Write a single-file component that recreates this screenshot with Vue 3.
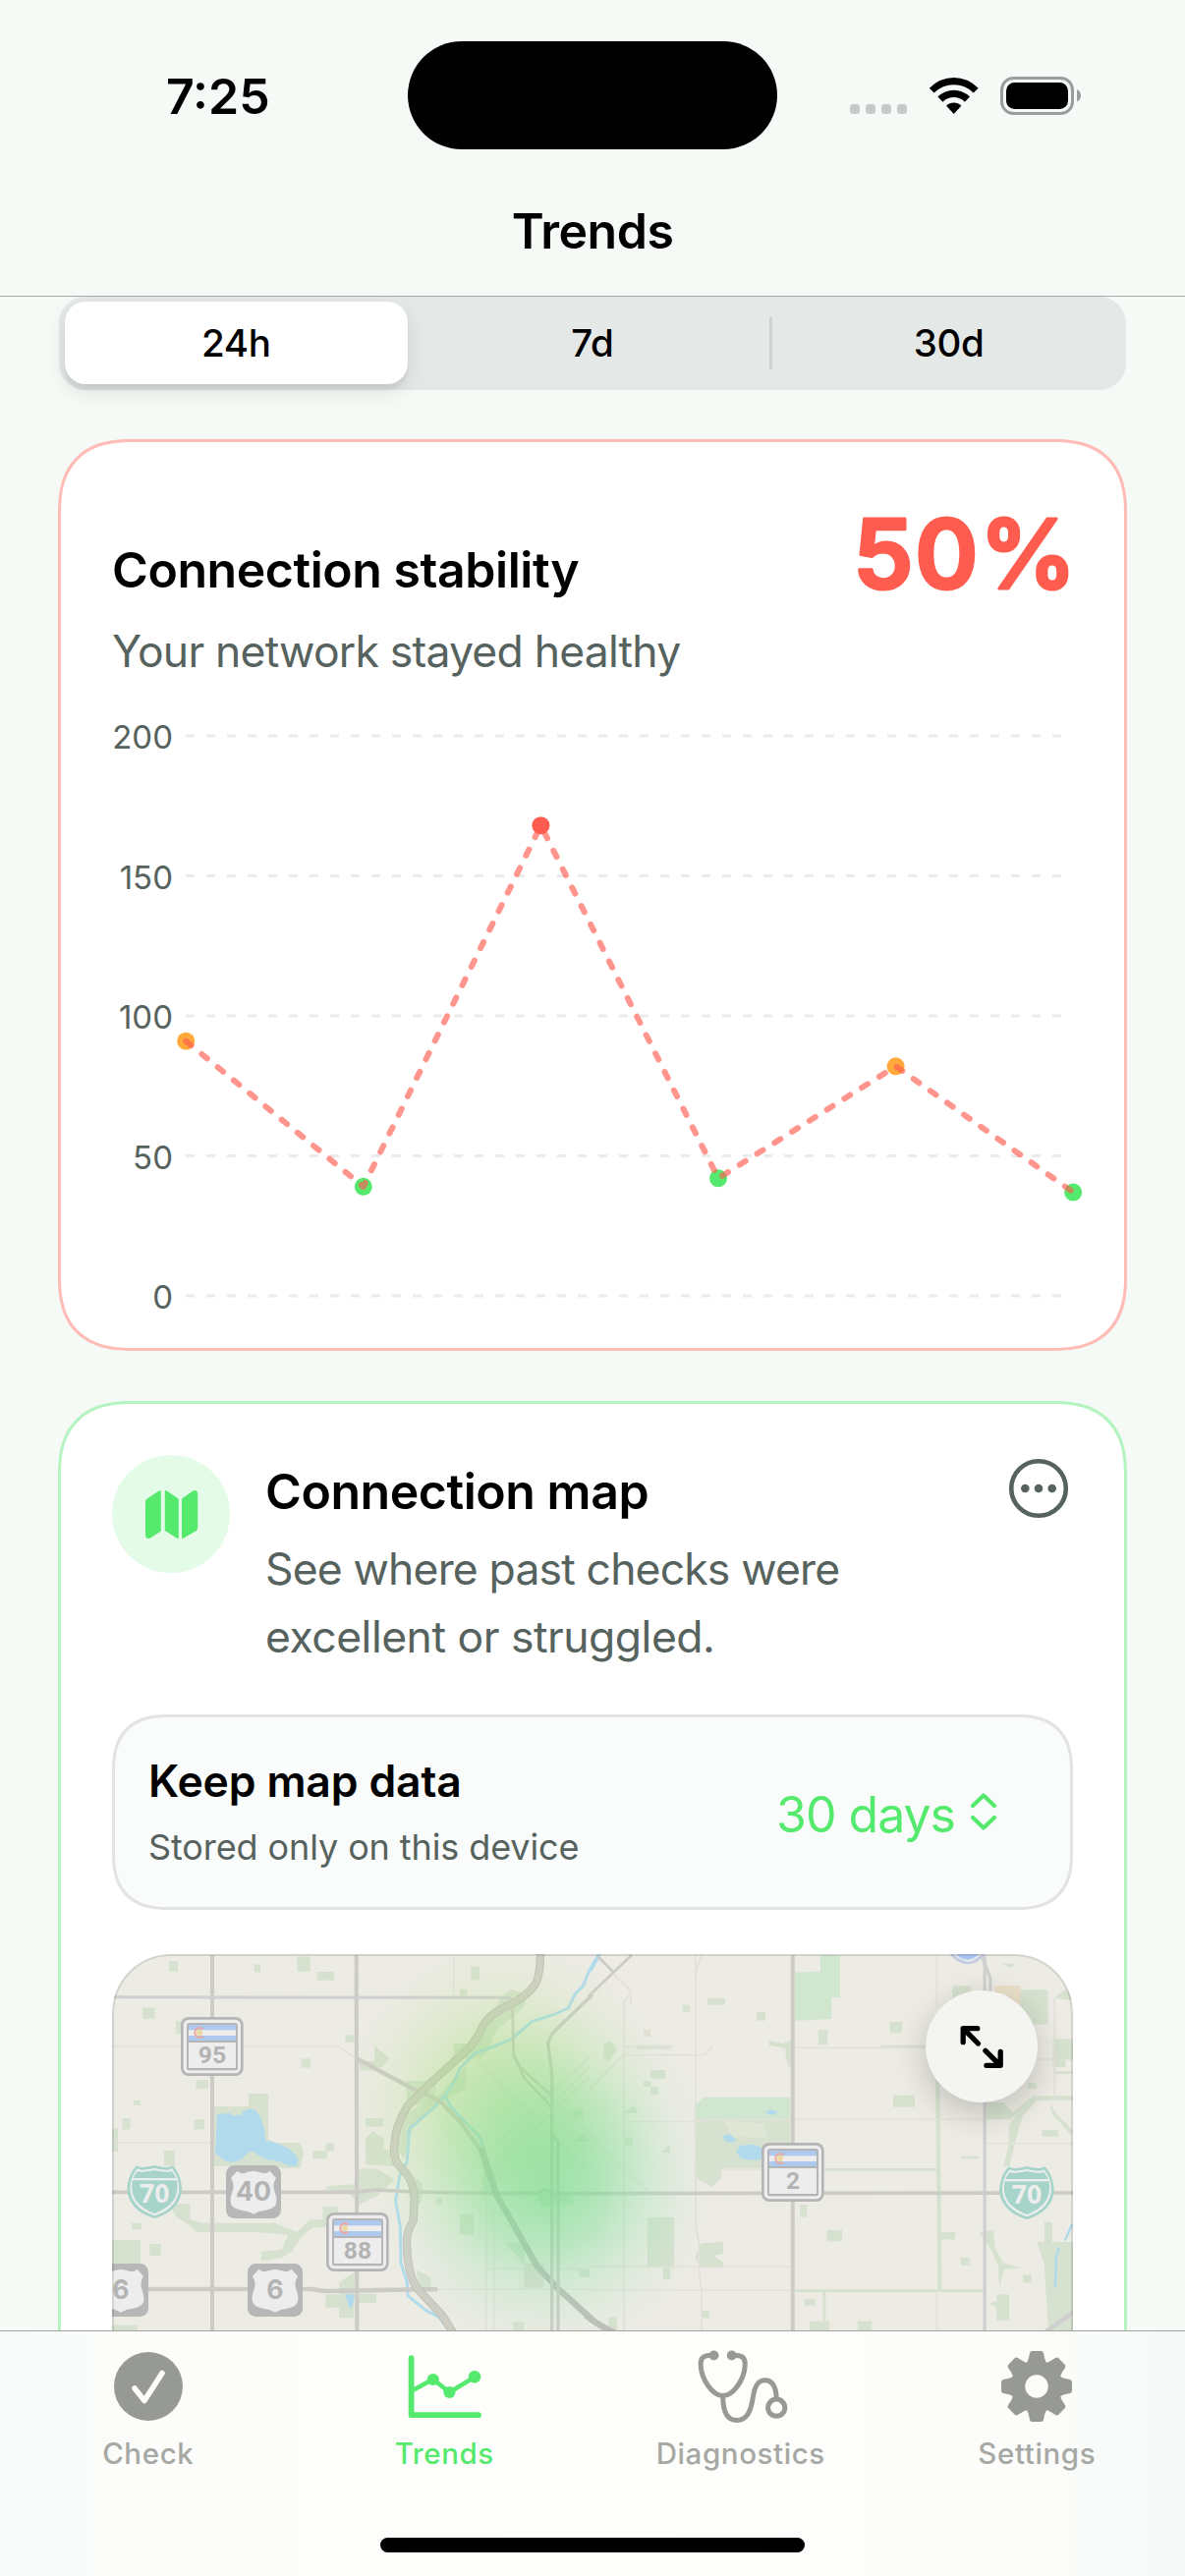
<script setup>
import { ref, computed } from 'vue';

const ranges = ['24h', '7d', '30d'];
const activeRange = ref('24h');
const activeTab = ref('Trends');
const tabs = ['Check', 'Trends', 'Diagnostics', 'Settings'];

const gridValues = [200, 150, 100, 50, 0];
const samples = [
    { value: 91, color: '#ffa93b' },
    { value: 39, color: '#55ea6e' },
    { value: 168, color: '#ff5c50' },
    { value: 42, color: '#55ea6e' },
    { value: 82, color: '#ffa93b' },
    { value: 37, color: '#55ea6e' },
];

function valueY(value) {
    return 599 - value * 2.85;
}

function sampleX(index) {
    return 74.2 + index * 180.6;
}

const linePoints = computed(() => samples.map((s, i) => `${sampleX(i)},${valueY(s.value)}`).join(' '));

// Parks left of the river: x, y, width, height
const westParks = [
    [216, 78, 27, 32], [477, 88, 18, 24], [607, 64, 40, 46], [667, 111, 53, 26], [1138, 94, 26, 42],
    [1104, 165, 22, 20], [136, 220, 37, 34], [237, 262, 30, 38], [754, 304, 28, 22], [620, 376, 28, 28],
    [298, 442, 37, 26], [108, 504, 20, 14], [74, 558, 24, 34], [292, 562, 32, 30], [201, 657, 32, 46],
    [816, 558, 54, 26], [655, 658, 44, 24], [694, 634, 26, 24], [42, 930, 87, 74], [157, 942, 34, 36],
    [102, 878, 30, 20], [686, 828, 46, 50], [1104, 850, 42, 64],
    [1266, 1180, 34, 28], [694, 1096, 46, 40], [795, 1094, 54, 28], [942, 444, 88, 74], [1085, 330, 70, 46],
    [42, 590, 18, 70], [1032, 802, 18, 18], [1470, 1018, 30, 26], [1450, 532, 30, 28], [42, 1190, 78, 18],
    [797, 384, 46, 28],
];
const eastParks = [
    [336, 192, 50, 20], [265, 212, 20, 22], [476, 234, 25, 26], [652, 288, 26, 46], [865, 488, 62, 36],
    [856, 264, 34, 34], [174, 411, 42, 26], [154, 444, 20, 18], [174, 462, 22, 24], [98, 618, 24, 26],
    [600, 822, 19, 38], [676, 900, 44, 34], [1058, 984, 26, 24], [613, 1110, 30, 20], [764, 1178, 40, 30],
    [628, 1178, 56, 30], [165, 861, 76, 152], [210, 1010, 20, 40], [134, 335, 96, 12], [1034, 154, 52, 40],
    [1248, 450, 26, 18], [1320, 316, 60, 64], [1060, 674, 50, 8], [1002, 906, 40, 22], [1236, 1036, 24, 24],
    [322, 1146, 20, 22], [54, 1164, 24, 44], [1290, 594, 46, 20], [1160, 1096, 36, 80], [1226, 166, 80, 106],
    [1296, 876, 22, 62], [1320, 380, 36, 22],
];

const stateRoutes = [
    { label: '95', x: 252, y: 249 },
    { label: '88', x: 696, y: 846 },
    { label: '2', x: 2025, y: 633 },
];
const usRoutes = [
    { label: '40', x: 390, y: 702 },
    { label: '6', x: 456, y: 1002 },
    { label: '6', x: -15, y: 1002 },
];
const interstates = [
    { label: '70', x: 88, y: 701 },
    { label: '70', x: 2751, y: 704 },
];

const gearTeeth = [0, 45, 90, 135, 180, 225, 270, 315];
</script>

<template>
    <div class="screen">
        <header class="top-bar">
            <div class="status-row">
                <div class="clock">7:25</div>
                <div class="island"></div>
                <svg class="status-icons" viewBox="865 70 240 56">
                    <g fill="#c5c9c7">
                        <rect x="865" y="106" width="10" height="10" rx="3.2" />
                        <rect x="881" y="106" width="10" height="10" rx="3.2" />
                        <rect x="897" y="106" width="10" height="10" rx="3.2" />
                        <rect x="913" y="106" width="10" height="10" rx="3.2" />
                    </g>
                    <path d="M945.8 89.8 Q956.5 79 970.7 79 Q985 79 995.6 89.8 L990.8 94.6 Q982.3 86.3 970.7 86.3 Q959.2 86.3 950.6 94.6 Z" />
                    <path d="M954.4 98.6 Q961.5 91.8 970.7 91.8 Q980 91.8 987 98.6 L981.9 103.7 Q977.2 99.1 970.7 99.1 Q964.3 99.1 959.5 103.7 Z" />
                    <path d="M963.1 107.8 Q966.3 104.5 970.7 104.5 Q975.1 104.5 978.3 107.8 L970.7 116 Z" />
                    <rect x="1019.5" y="79.5" width="72" height="36" rx="12" fill="none" stroke="#999d9b" stroke-width="3" />
                    <rect x="1024" y="84" width="63" height="27" rx="8.5" />
                    <path d="M1096 91 Q1100 93 1100 97.3 Q1100 101.5 1096 103.5 Z" fill="#999d9b" />
                </svg>
            </div>
            <h1 class="page-title">Trends</h1>
        </header>

        <main class="content">
            <div class="segmented">
                <button
                    v-for="range in ranges" :key="range"
                    class="segment" :class="{ 'segment-active': range === activeRange }"
                    @click="activeRange = range">{{ range }}</button>
            </div>

            <section class="card card-red">
                <div class="stability-head">
                    <h2 class="card-title">Connection stability</h2>
                    <svg class="percent" viewBox="0 0 244 130">
                        <text x="8 71 137" y="99">50%</text>
                    </svg>
                </div>
                <p class="stability-text">Your network stayed healthy</p>
                <svg class="chart" viewBox="0 0 979 640">
                    <g v-for="value in gridValues" :key="value">
                        <text class="axis-label" x="61" :y="valueY(value) + 13" text-anchor="end">{{ value }}</text>
                        <line class="grid-line" x1="74" x2="965" :y1="valueY(value)" :y2="valueY(value)" />
                    </g>
                    <circle
                        v-for="(sample, index) in samples" :key="index"
                        :cx="sampleX(index)" :cy="valueY(sample.value)" r="9" :fill="sample.color" />
                    <polyline class="trend-line" :points="linePoints" />
                </svg>
            </section>

            <section class="card card-green">
                <div class="map-head">
                    <div class="map-badge">
                        <svg viewBox="0 0 120 120" fill="#55ea6e" stroke="#55ea6e" stroke-width="2" stroke-linejoin="round">
                            <path d="M35 47.5 Q35 46 36.5 45 L48.8 37 V77 L38.5 83.6 Q35 85 35 81 Z" />
                            <path d="M54.8 37 L66.8 45 V84 L54.8 76.5 Z" />
                            <path d="M72 45 L82.5 37.5 Q86.2 36 86.2 40 V74 Q86.2 75.5 85 76.4 L72 84 Z" />
                        </svg>
                    </div>
                    <div class="map-copy">
                        <h2 class="card-title">Connection map</h2>
                        <p class="map-text">See where past checks were<br><span class="map-text-end">excellent or struggled.</span></p>
                    </div>
                    <svg class="more" viewBox="0 0 62 62">
                        <circle cx="31" cy="31" r="27.8" fill="none" stroke="#56625e" stroke-width="4.6" />
                        <circle cx="17.3" cy="31" r="4.3" fill="#56625e" />
                        <circle cx="31" cy="31" r="4.3" fill="#56625e" />
                        <circle cx="44.7" cy="31" r="4.3" fill="#56625e" />
                    </svg>
                </div>

                <div class="keep-box">
                    <div class="keep-copy">
                        <h3 class="keep-title">Keep map data</h3>
                        <p class="keep-text">Stored only on this device</p>
                    </div>
                    <div class="keep-picker">
                        <span class="keep-value">30 days</span>
                        <svg class="chevrons" viewBox="0 0 28 40">
                            <path d="M3 14 L14 3.5 L25 14 M3 26 L14 36.5 L25 26" />
                        </svg>
                    </div>
                </div>

                <div class="map">
                    <svg class="map-canvas" viewBox="114 1989 979 400">
                        <defs>
                            <radialGradient id="heatYellow">
                                <stop offset="0" stop-color="#8fdc68" stop-opacity=".5" />
                                <stop offset=".35" stop-color="#9adf70" stop-opacity=".38" />
                                <stop offset=".7" stop-color="#b4e486" stop-opacity=".15" />
                                <stop offset="1" stop-color="#cfe9a0" stop-opacity="0" />
                            </radialGradient>
                            <radialGradient id="heatGreen">
                                <stop offset="0" stop-color="#6fdd8c" stop-opacity=".52" />
                                <stop offset=".35" stop-color="#7be097" stop-opacity=".4" />
                                <stop offset=".7" stop-color="#98e6b0" stop-opacity=".18" />
                                <stop offset="1" stop-color="#b5ecc6" stop-opacity="0" />
                            </radialGradient>
                        </defs>
                        <rect x="114" y="1989" width="979" height="400" fill="#ecebe4" />

                        <!-- west half -->
                        <g transform="translate(100 1970) scale(.33333)">
                            <g fill="#d6e1cf">
                                <rect v-for="(p, i) in westParks" :key="i" :x="p[0]" :y="p[1]" :width="p[2]" :height="p[3]" />
                                <path d="M355 522 H459 V483 H519 V622 L540 633 H615 L627 660 L617 710 H560 L540 704 H355 Z" />
                                <path d="M843 336 L890 376 L868 402 H843 Z M816 618 L838 598 L872 620 V650 L905 658 V705 L816 700 Z" />
                                <path d="M797 712 H850 L905 745 L860 790 L797 822 L768 790 L697 776 V766 L780 760 Z" />
                                <path d="M216 820 H280 V866 L312 878 H540 L606 905 L648 868 H696 V892 H655 L625 915 L590 965 L560 984 L498 994 V965 L560 960 L580 915 L480 905 H300 L280 886 L240 860 Z" />
                                <path d="M1228 190 L1262 165 L1308 178 L1300 220 L1215 290 L1190 350 L1165 380 L1150 350 L1190 270 Z" />
                                <path d="M910 560 L985 520 L1050 480 L1090 430 L1126 400 L1120 470 L1060 500 L960 590 L935 680 L905 650 Z" />
                                <path d="M735 1060 L785 1025 L780 1168 H735 Z M970 740 L990 760 L988 812 L960 830 Z M970 1020 L1015 1045 L1020 1090 L980 1080 Z" />
                                <path d="M1170 740 L1195 700 L1215 730 L1215 790 L1180 790 Z M1340 790 L1385 785 L1380 825 L1350 832 Z M1450 630 L1480 600 L1500 630 Z" />
                                <path d="M1245 940 H1300 V1010 L1280 980 Z M1390 790 H1450 V820 H1390 Z" />
                            </g>
                            <rect x="1300" y="1000" width="60" height="76" fill="#e0dcd4" />
                            <g class="minor-road">
                                <path d="M42 338 H730 L792 380 M42 633 H345 M1085 60 V185 M800 1080 H1500 M1185 800 V1208 M1208 830 V1208 M1185 1018 H1500" />
                                <path d="M1150 380 L1500 720 M1200 720 L1500 430 M1215 640 L1500 370 M1240 660 L1500 400 M1400 510 L1500 610" />
                            </g>
                            <g fill="#b1dbec">
                                <path d="M363 546 L400 542 L412 550 L440 547 L440 538 L460 530 L480 533 L498 560 L508 600 L510 626 L545 634 L580 650 L600 668 L612 685 L604 704 L578 703 L555 690 L515 684 L490 672 L470 657 L450 670 L440 682 L420 692 L390 690 L357 665 Z" />
                                <path d="M754 1096 H783 L780 1120 L770 1142 L762 1125 Z" />
                            </g>
                            <g class="water-line">
                                <path d="M1500 105 L1480 155 L1455 180 L1435 222 L1395 240 L1325 262 L1260 318 L1205 340 L1150 360 L1105 405 L1085 450 L1058 490 L1020 530 L950 590 L943 690 L920 735 L908 810 L922 890 L924 1000 L943 1060 L945 1100 L1000 1145 L1040 1165 L1070 1205" />
                                <path d="M1058 490 L1078 525 L1130 580 L1165 615 L1178 660" />
                            </g>
                            <g class="road">
                                <path d="M348 60 V1210 M788 60 L790 1210" stroke-width="12" />
                                <path d="M42 188 L1255 190 L1275 205" stroke="#cfcfcf" stroke-width="9" />
                                <path d="M42 784 H780 L850 777 L960 783 L1190 787 H1340 L1362 776 L1385 788 H1500" stroke-width="11" />
                                <path d="M790 376 L960 468 L990 478 L1050 512 L1110 575 L1165 652 L1195 750" stroke-width="13" />
                                <path class="trunk-road" d="M1170 650 L1215 790 L1340 1010 L1400 1075 L1510 1175" />
                                <path d="M1265 225 L1268 365 L1300 435 L1385 525 M1268 365 L1290 405 L1385 490" />
                                <path d="M1510 180 L1385 300 L1373 330 L1385 420 V1210 M1385 605 L1404 630 V1210" stroke-width="10" />
                                <path d="M42 1080 H650 L690 1086 L1035 1080" stroke-width="13" />
                            </g>
                            <path class="highway-edge" d="M1350 50 Q1350 130 1330 155 Q1305 190 1240 220 Q1190 245 1175 275 Q1155 325 1120 355 L1010 455 L945 520 Q905 580 903 650 Q903 690 925 710 Q965 750 965 800 L962 870 Q942 905 942 930 Q942 1050 985 1090 L1050 1160 L1085 1215" />
                            <path class="highway" d="M1350 50 Q1350 130 1330 155 Q1305 190 1240 220 Q1190 245 1175 275 Q1155 325 1120 355 L1010 455 L945 520 Q905 580 903 650 Q903 690 925 710 Q965 750 965 800 L962 870 Q942 905 942 930 Q942 1050 985 1090 L1050 1160 L1085 1215" />
                        </g>

                        <!-- east half -->
                        <g transform="translate(600 1970) scale(.35714 .33333)">
                            <g fill="#d6e1cf">
                                <rect v-for="(p, i) in eastParks" :key="i" :x="p[0]" :y="p[1]" :width="p[2]" :height="p[3]" />
                                <path d="M300 520 L325 494 H572 V710 H376 V738 L350 768 L310 745 L300 715 Z" />
                                <path d="M512 322 L550 330 L574 318 V410 L560 380 L558 345 L512 335 Z M318 940 L381 936 V972 L352 978 L381 1000 V1010 L318 1013 L300 985 Z" />
                                <path d="M38 380 L42 330 L62 322 L78 350 L55 384 Z M98 542 L125 520 L140 542 Z M204 662 L230 640 V664 Z" />
                                <path d="M1130 510 H1180 L1205 540 L1265 490 H1380 V504 H1275 L1235 550 L1215 620 L1197 704 H1180 L1195 640 V580 L1220 540 L1200 562 H1130 Z" />
                                <path d="M1274 936 H1380 V1208 H1308 L1300 1080 L1295 1000 Z M1312 510 L1328 540 L1380 600 L1370 606 L1318 545 Z" />
                                <path d="M1110 905 L1150 900 L1155 950 L1178 1000 L1230 1015 L1180 1020 L1168 1075 L1165 1010 L1145 960 Z M1140 1125 L1195 1100 L1185 1178 L1165 1140 Z" />
                                <path d="M1175 85 L1215 88 L1200 98 Z M1325 190 L1355 165 L1380 180 V200 Z" />
                            </g>
                            <g fill="#d0e6ce">
                                <path d="M585 113 L658 110 V60 H714 V190 H689 V254 L640 258 L585 260 Z M300 520 L325 496 H572 V558 H300 Z" />
                            </g>
                            <path d="M380 565 L500 575 L505 620 L440 615 L410 618 Z" fill="#dfe6d6" />
                            <path d="M1154 153 H1228 V215 H1210 L1186 178 H1154 Z" fill="#e9dfc8" />
                            <rect x="154" y="288" width="20" height="20" fill="#e4dcd2" />
                            <g class="park-line">
                                <path d="M992 440 L998 1084" stroke-width="12" />
                                <path d="M668 715 H990 M585 1085 H1125 M669 1085 V1180 M832 339 H960 M1324 419 H1380" />
                            </g>
                            <g class="minor-road">
                                <path d="M302 60 V880 L312 940 V1020 L320 1100 V1208 M98 200 V1208 M95 340 L240 340 M98 365 H330 L350 340 M0 470 L98 365 M65 115 L118 170 V210 M98 200 L118 175" />
                                <path d="M98 570 L300 568 L340 562 H1125 M585 343 H960 M0 610 L165 780 M0 1012 H575 M0 1083 H580 M990 60 V220 M1130 635 H1380 M1280 378 H1320 M1325 190 V500 M375 715 H500 M990 1090 V1208 M318 60 L302 120" />
                            </g>
                            <g fill="#b1dbec">
                                <path d="M380 612 L400 606 L418 625 L408 633 L385 628 Z M500 540 L515 530 L538 540 L520 549 Z M417 660 L430 641 L470 638 L495 650 V682 L465 687 L430 680 Z" />
                            </g>
                            <g class="water-line">
                                <path d="M32 50 L0 110" stroke-width="12" />
                                <path d="M1338 952 L1330 980 L1327 1075 M1375 882 L1355 932 M1280 68 L1320 92" stroke-width="7" />
                            </g>
                            <g class="road">
                                <path d="M579 60 V1210" stroke-width="11" />
                                <path d="M1126 60 V1210 M1118 65 L1142 130 V180" stroke="#cfcfcf" stroke-width="9" />
                                <path d="M-10 788 L1380 786" stroke-width="11" />
                                <path d="M120 60 L-5 188 M22 62 L68 112" />
                                <path class="trunk-road" d="M-10 1160 Q30 1195 75 1215" />
                                <path d="M1300 1210 L1380 1150" stroke="#cfcfcf" stroke-width="13" />
                            </g>
                            <path d="M1028 55 H1130 Q1105 88 1078 88 Q1050 86 1028 60 Z" fill="#c3cce2" />
                            <path d="M1040 55 H1118 Q1098 80 1078 80 Q1055 76 1040 60 Z" fill="#ededed" />
                            <path d="M1046 55 H1112 Q1096 74 1078 74 Q1060 74 1046 60 Z" fill="#a9c5f0" />
                        </g>

                        <!-- signal quality heat -->
                        <ellipse cx="513" cy="2145" rx="165" ry="170" fill="url(#heatYellow)" />
                        <ellipse cx="554" cy="2238" rx="165" ry="155" fill="url(#heatGreen)" />
                        <ellipse cx="580" cy="2180" rx="140" ry="150" fill="url(#heatGreen)" opacity=".45" />

                        <g transform="translate(100 1970) scale(.33333)">
                            <g v-for="r in stateRoutes" :key="r.x" :transform="`translate(${r.x} ${r.y})`">
                                <rect width="191" height="180" rx="24" fill="#b5b5b5" />
                                <rect x="8" y="8" width="175" height="164" rx="17" fill="#ededed" />
                                <rect x="18" y="18" width="156" height="145" rx="8" fill="#b5b5b5" />
                                <rect x="24" y="24" width="144" height="132" fill="#ededed" />
                                <rect x="24" y="24" width="144" height="16" fill="#adc9ee" />
                                <rect x="24" y="57" width="144" height="15" fill="#adc9ee" />
                                <rect x="24" y="72" width="144" height="6" fill="#b5b5b5" />
                                <circle cx="57" cy="48" r="9" fill="#ecd9a0" />
                                <path d="M67.5 37.5 A14.5 14.5 0 1 0 67.5 58.5" fill="none" stroke="#eaa9a5" stroke-width="6.5" />
                                <text class="route" x="96" y="141" font-size="74">{{ r.label }}</text>
                            </g>
                            <g v-for="r in usRoutes" :key="r.x" :transform="`translate(${r.x} ${r.y})`">
                                <rect width="168" height="162" rx="25" fill="#b7b7b7" />
                                <path d="M34 17 Q48 29 62 22 Q73 19 84 17 Q95 19 106 22 Q120 29 134 17 L153 39 Q140 58 149 82 Q158 105 152 120 Q145 133 120 137 Q100 139 84 149 Q68 139 48 137 Q23 133 16 120 Q10 105 19 82 Q28 58 15 39 Z" fill="#ededed" />
                                <text class="route route-wide" x="84" y="107" font-size="80">{{ r.label }}</text>
                            </g>
                            <g v-for="r in interstates" :key="r.x" :transform="`translate(${r.x} ${r.y})`">
                                <path d="M28 2 Q42 10 56 6 Q72 4 84 1 Q96 4 112 6 Q126 10 140 2 Q165 30 167 72 Q165 138 84 163 Q3 138 0 72 Q3 30 28 2 Z" fill="#a6d4c9" />
                                <path d="M31 11 Q44 18 58 14 Q74 12 84 9 Q94 12 110 14 Q124 18 137 11 Q158 36 159 72 Q156 130 84 155 Q12 130 9 72 Q10 36 31 11 Z" fill="#ededed" />
                                <path d="M33 18 Q46 24 60 20 Q74 18 84 16 Q94 18 108 20 Q122 24 135 18 Q145 28 150 40 H18 Q23 28 33 18 Z" fill="#a6d4c9" />
                                <path d="M16 47 H152 Q154 60 153 74 Q149 124 84 148 Q19 124 15 74 Q14 60 16 47 Z" fill="#a6d4c9" />
                                <text class="route route-light" x="84" y="115" font-size="80">{{ r.label }}</text>
                            </g>
                        </g>
                    </svg>
                    <button class="expand">
                        <svg viewBox="0 0 114 114">
                            <path d="M53.4 54 L39 39.3 M52.8 38.7 H38.2 V52.7 M60.9 61.3 L75.6 75.8 M76.2 62.3 V76.3 H61.9" />
                        </svg>
                    </button>
                </div>
            </section>
        </main>

        <nav class="tab-bar">
            <div class="tabs">
                <button
                    v-for="tab in tabs" :key="tab"
                    class="tab" :class="{ 'tab-active': tab === activeTab }"
                    @click="activeTab = tab">
                    <svg v-if="tab === 'Check'" class="tab-icon" viewBox="-50 -40 100 80">
                        <circle r="35" fill="currentColor" />
                        <path d="M-14 2 L-4 14.5 L14 -13.5" fill="none" stroke="#fdfefc" stroke-width="5.5" stroke-linecap="round" stroke-linejoin="round" />
                    </svg>
                    <svg v-else-if="tab === 'Trends'" class="tab-icon tab-stroke" viewBox="-50 -40 100 80">
                        <path d="M-33.4 -29 V29.2 H35" stroke-width="5.7" />
                        <path d="M-33 4.5 L-11.2 -7.3 L5.4 6 L31.2 -9.7" stroke-width="4.5" />
                        <g fill="currentColor" stroke="none">
                            <circle cx="-11.2" cy="-7" r="6.1" />
                            <circle cx="5.4" cy="6" r="6.1" />
                            <circle cx="31" cy="-9.7" r="6.3" />
                        </g>
                    </svg>
                    <svg v-else-if="tab === 'Diagnostics'" class="tab-icon tab-stroke" viewBox="-50 -40 100 80" stroke-width="5">
                        <path d="M-28 -31.5 H-32 C-39 -31.5 -41.3 -28 -40.8 -21 C-40 -7 -29 9.5 -18.3 9.5 C-7.6 9.5 3.4 -7 4.2 -21 C4.7 -28 2.4 -31.5 -4.6 -31.5 H-9" />
                        <circle cx="-27.5" cy="-31.5" r="5" fill="currentColor" stroke="none" />
                        <circle cx="-9.2" cy="-31.5" r="5" fill="currentColor" stroke="none" />
                        <path d="M-18.3 10 C-18.3 24 -14.5 34.5 -4.3 34.5 C7 34.5 10.5 24 12.5 10 C14.3 -1 17.5 -6.3 24.5 -6.3 C32 -6.3 35.8 0 36.2 12" />
                        <circle cx="36.2" cy="21.7" r="8.6" />
                    </svg>
                    <svg v-else class="tab-icon" viewBox="-50 -40 100 80" fill="currentColor">
                        <path v-for="angle in gearTeeth" :key="angle" :transform="`rotate(${angle})`" d="M-11.5 -22 Q-9 -25.5 -8.3 -28 L-7 -34 Q-6.5 -36 -4.5 -36 H4.5 Q6.5 -36 7 -34 L8.3 -28 Q9 -25.5 11.5 -22 Z" />
                        <circle r="18.5" fill="none" stroke="currentColor" stroke-width="13.5" />
                    </svg>
                    <span class="tab-label">{{ tab }}</span>
                </button>
            </div>
            <div class="home-indicator"></div>
        </nav>
    </div>
</template>

<style>
body {
    margin: 0;
}
</style>

<style scoped>
.screen {
    width: 1206px;
    height: 2622px;
    display: flex;
    flex-direction: column;
    overflow: hidden;
    background: #f5faf7;
    color: #000;
    font-family: Inter, "Liberation Sans", sans-serif;
}

h1, h2, h3, p {
    margin: 0;
}

button {
    border: 0;
    padding: 0;
    background: none;
    font-family: inherit;
    color: inherit;
}

svg {
    display: block;
}

.top-bar {
    box-sizing: border-box;
    height: 302px;
    flex: none;
    border-bottom: 1px solid #a5aaa7;
}

.status-row {
    height: 110px;
    padding-top: 42px;
    display: grid;
    grid-template-columns: 415px 376px 1fr;
    align-items: center;
}

.clock {
    padding-left: 169px;
    margin-top: 2px;
    font-size: 50px;
    font-weight: 600;
    line-height: 60px;
}

.island {
    height: 110px;
    border-radius: 55px;
    background: #000;
}

.status-icons {
    width: 240px;
    height: 56px;
    margin-left: 74px;
    margin-top: 2px;
}

.page-title {
    margin-top: 53px;
    font-size: 50px;
    font-weight: 600;
    line-height: 60px;
    letter-spacing: -.5px;
    text-align: center;
}

.content {
    flex: 1;
    min-height: 0;
    overflow: hidden;
    padding: 0 59px;
}

.segmented {
    height: 84px;
    margin: 0 1px;
    padding: 5px 6px 6px;
    display: grid;
    grid-template-columns: repeat(3, 1fr);
    gap: 14px;
    border-radius: 27px;
    background: #e4e9e7;
}

.segment {
    position: relative;
    font-size: 38.5px;
    font-weight: 450;
    border-radius: 21px;
    letter-spacing: -.3px;
}

.segment-active {
    background: #fff;
    font-weight: 550;
    box-shadow: 0 8px 20px rgba(0, 0, 0, .1), 0 6px 3px rgba(0, 0, 0, .05);
}

.segment:last-child::before {
    content: "";
    position: absolute;
    left: -8px;
    top: 15px;
    width: 3px;
    height: 54px;
    border-radius: 2px;
    background: #cfd3d1;
}

.card {
    box-sizing: border-box;
    border: 3px solid;
    border-radius: 64px;
    background: #fff;
}

.card-red {
    height: 928px;
    margin-top: 50px;
    padding: 50px 52px 0 53px;
    border-color: #ffbbb5;
}

.card-green {
    height: 1100px;
    margin-top: 51px;
    padding: 53px 52px 0;
    border-color: #b5f4c0;
}

.stability-head {
    display: flex;
    justify-content: space-between;
    align-items: flex-end;
    height: 110px;
}

.card-title {
    font-size: 50px;
    font-weight: 600;
    line-height: 60px;
    letter-spacing: -.45px;
}

.stability-head .card-title {
    margin-left: -1px;
}

.percent {
    width: 244px;
    height: 130px;
    margin: 0 -12px -20px 0;
}

.percent text {
    font-size: 98px;
    font-weight: 600;
    fill: #ff5c50;
    stroke: #ff5c50;
    stroke-width: 3px;
    stroke-linejoin: round;
}

.stability-text {
    margin-top: 25px;
    margin-left: -1px;
    font-size: 44.5px;
    line-height: 56px;
    letter-spacing: -.8px;
    color: #56625e;
}

.chart {
    width: 979px;
    height: 640px;
    margin-top: 29px;
    overflow: visible;
}

.axis-label {
    font-size: 33px;
    fill: #56625e;
}

.grid-line {
    stroke: #ebebeb;
    stroke-width: 3;
    stroke-dasharray: 9 12;
}

.trend-line {
    fill: none;
    stroke: #ff5c50;
    stroke-opacity: .65;
    stroke-width: 6;
    stroke-linecap: round;
    stroke-linejoin: round;
    stroke-dasharray: 7 14;
}

.map-head {
    display: flex;
    height: 263px;
}

.map-badge {
    width: 120px;
    height: 120px;
    margin-top: -1px;
    border-radius: 50%;
    background: #e4fbe8;
}

.map-copy {
    flex: 1;
    padding: 6px 0 0 36px;
}

.map-text {
    margin-top: 15px;
    font-size: 44.5px;
    line-height: 69px;
    letter-spacing: -.85px;
    color: #56625e;
}

.map-text-end {
    letter-spacing: -.5px;
}

.more {
    width: 62px;
    height: 62px;
    margin: 2px 4px 0 0;
}

.keep-box {
    box-sizing: border-box;
    height: 199px;
    padding: 0 74px 0 34px;
    display: flex;
    justify-content: space-between;
    align-items: center;
    border: 3px solid #e2e4e3;
    border-radius: 49px;
    background: #fafcfb;
}

.keep-title {
    margin-top: -1px;
    font-size: 44.5px;
    font-weight: 600;
    line-height: 54px;
    letter-spacing: -.15px;
}

.keep-text {
    margin-top: 18px;
    font-size: 36px;
    line-height: 44px;
    letter-spacing: -.1px;
    color: #56625e;
}

.keep-picker {
    display: flex;
    align-items: center;
    gap: 15px;
    margin-top: 4px;
    color: #55ea6e;
}

.keep-value {
    font-size: 50px;
    line-height: 60px;
    letter-spacing: -1px;
}

.chevrons {
    width: 28px;
    height: 40px;
    fill: none;
    stroke: #55ea6e;
    stroke-width: 4.2;
    stroke-linecap: round;
    stroke-linejoin: round;
    margin-bottom: 5px;
}

.map {
    position: relative;
    height: 400px;
    margin-top: 45px;
    border-radius: 60px 60px 0 0;
    overflow: hidden;
}

.map::after {
    content: "";
    position: absolute;
    inset: 0;
    border: 2px solid rgba(0, 0, 0, .11);
    border-radius: 60px 60px 0 0;
}

/* smoother corners where the browser can draw them */
@supports (corner-shape: superellipse(1.3)) {
    .card {
        corner-shape: superellipse(1.3);
        border-radius: 75px;
    }

    .keep-box {
        corner-shape: superellipse(1.3);
        border-radius: 57px;
    }
}

.map-canvas {
    width: 979px;
    height: 400px;
}

.road {
    fill: none;
    stroke: #cccbc6;
    stroke-width: 8;
    stroke-linejoin: round;
}

.trunk-road {
    stroke: #bdbdb9;
    stroke-width: 19;
}

.minor-road {
    fill: none;
    stroke: #e2e1da;
    stroke-width: 5;
}

.park-line {
    fill: none;
    stroke: #d6e1cf;
    stroke-width: 8;
}

.water-line {
    fill: none;
    stroke: #b1dbec;
    stroke-width: 9;
    stroke-linejoin: round;
}

.highway-edge {
    fill: none;
    stroke: #bdbdb4;
    stroke-width: 25;
}

.highway {
    fill: none;
    stroke: #cfcec5;
    stroke-width: 20;
}

.route {
    font-family: Roboto, sans-serif;
    font-weight: 700;
    fill: #b3b3b3;
    text-anchor: middle;
}

.route-wide {
    font-family: Inter, sans-serif;
}

.route-light {
    font-family: "Open Sans", sans-serif;
    fill: #ededed;
}

.expand {
    position: absolute;
    z-index: 1;
    top: 37px;
    right: 36px;
    width: 114px;
    height: 114px;
    border-radius: 50%;
    background: #f4f4f0;
    box-shadow: 0 10px 34px rgba(0, 0, 0, .2);
}

.expand path {
    fill: none;
    stroke: #000;
    stroke-width: 5.3;
    stroke-linecap: round;
    stroke-linejoin: round;
}

.tab-bar {
    box-sizing: border-box;
    flex: none;
    height: 250px;
    padding-top: 16px;
    border-top: 1px solid #a3a49f;
    background: linear-gradient(90deg, #f6faf8 0, #fcfdfb 12%, #fefefb 50%, #fcfdfb 86%, #f5f9f7 100%);
}

.tabs {
    display: grid;
    grid-template-columns: repeat(4, 1fr);
    height: 194px;
}

.tab {
    display: flex;
    flex-direction: column;
    align-items: center;
    color: #979994;
}

.tab-icon {
    width: 100px;
    height: 80px;
}

.tab-stroke {
    fill: none;
    stroke: currentColor;
    stroke-linecap: round;
    stroke-linejoin: round;
}

.tab-label {
    margin-top: 10px;
    font-size: 29.5px;
    font-weight: 500;
    line-height: 36px;
    letter-spacing: .6px;
    color: #a6a8a4;
}

.tab-active, .tab-active .tab-label {
    color: #55ea6e;
}

.home-indicator {
    width: 432px;
    height: 15px;
    margin: 0 auto;
    border-radius: 8px;
    background: #000;
}
</style>
